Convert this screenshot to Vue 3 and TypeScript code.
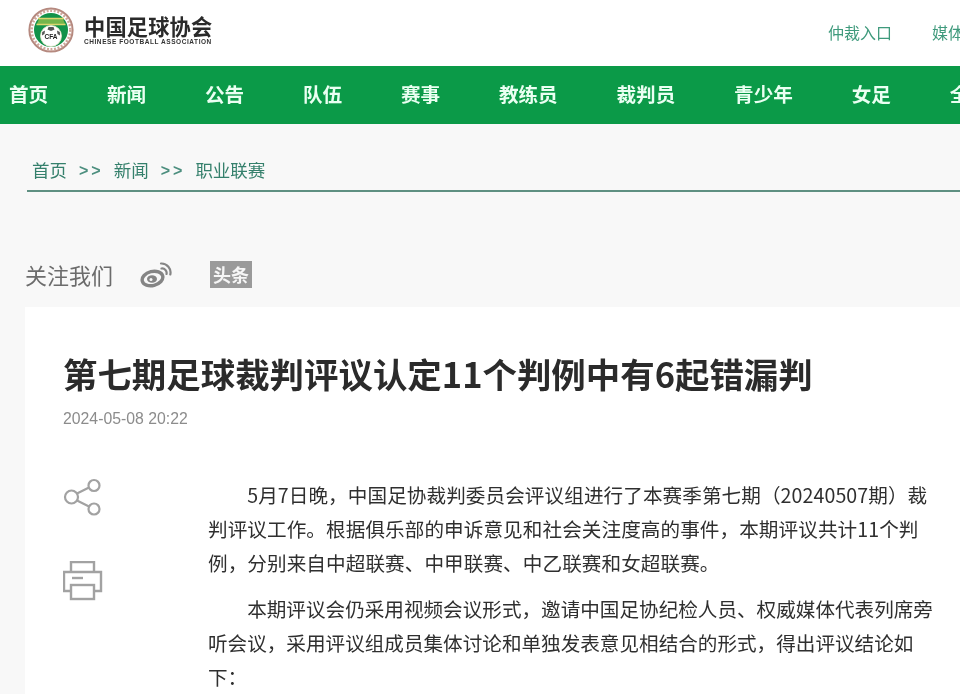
<script setup lang="ts">
const navItems: string[] = ['首页', '新闻', '公告', '队伍', '赛事', '教练员', '裁判员', '青少年', '女足', '全部']
const crumbs: string[] = ['首页', '新闻', '职业联赛']
</script>

<template>
  <div class="page">
    <header class="top">
      <div class="brand">
        <svg class="emblem" width="48" height="48" viewBox="0 0 48 48">
          <circle cx="24" cy="24" r="21.600" fill="#fff" stroke="#b5897f" stroke-width="2" />
          <circle cx="24" cy="24" r="19.400" fill="none" stroke="#cfa79b" stroke-width="2.600" stroke-dasharray="2 1.600" />
          <circle cx="24" cy="24" r="17" fill="#12924a" />
          <path d="M12 13h24l2.500 6h-29z" fill="#74b54c" />
          <path d="M11 12.500h26M9.500 18.500h29" stroke="#dcd56e" stroke-width="1.600" />
          <circle cx="24" cy="30" r="10.500" fill="#fff" stroke="#e6e6c8" stroke-width="0.800" />
          <path d="M21.500 21h5l1 2.500-3.500 1.500-3.500-1.500zM15.200 26l2.800-1.500-.5 3.500-2.500 1.500zM32.800 26l-2.800-1.500.5 3.500 2.500 1.500z" fill="#555" />
          <text x="24" y="33" class="cfa">CFA</text>
        </svg>
        <div class="brand-text">
          <span class="cn">中国足球协会</span>
          <span class="en">CHINESE FOOTBALL ASSOCIATION</span>
        </div>
      </div>
      <div class="top-links">
        <span>仲裁入口</span>
        <span>媒体入口</span>
      </div>
    </header>

    <nav class="nav">
      <span v-for="item in navItems" :key="item">{{ item }}</span>
    </nav>

    <section class="upper">
      <div class="crumbs">
        <template v-for="(c, i) in crumbs" :key="c">
          <span v-if="i > 0" class="sep">&gt;&gt;</span>
          <span>{{ c }}</span>
        </template>
      </div>
      <div class="follow">
        <span>关注我们</span>
        <svg class="weibo" width="32" height="28" viewBox="0 0 32 28" fill="none">
          <ellipse cx="12.500" cy="18.500" rx="10.500" ry="7" transform="rotate(-14 12.500 18.500)" stroke="#858585" stroke-width="3.400" />
          <ellipse cx="12" cy="19" rx="5" ry="3.800" fill="#858585" />
          <circle cx="11" cy="19.500" r="1.500" fill="#f8f8f8" />
          <path d="M21.500 8.500a4.500 4.500 0 0 1 5 5.500M21 3.500a9 9 0 0 1 9.300 11" stroke="#858585" stroke-width="2.200" stroke-linecap="round" />
        </svg>
        <span class="toutiao">头条</span>
      </div>
    </section>

    <main class="card">
      <h1>第七期足球裁判评议认定11个判例中有6起错漏判</h1>
      <div class="date">2024-05-08 20:22</div>
      <div class="body">
        <aside class="tools">
          <svg width="40" height="40" viewBox="0 0 40 40" fill="none" stroke="#a2a2a2" stroke-width="2.200">
            <circle cx="8.500" cy="20" r="6.500" />
            <circle cx="31" cy="8.500" r="5.500" />
            <circle cx="31" cy="32" r="5.500" />
            <path d="M14 16.500l12-6M14 23.500l12 6" />
          </svg>
          <svg width="40" height="40" viewBox="0 0 40 40" fill="none" stroke="#a2a2a2" stroke-width="2.400">
            <path d="M8 11V1h23v10M8 30H1V11h37v19h-7" />
            <rect x="8" y="24" width="23" height="14" />
            <path d="M9 17h11" />
          </svg>
        </aside>
        <article class="text">
          <p class="first">5月7日晚，中国足协裁判委员会评议组进行了本赛季第七期（20240507期）裁判评议工作。根据俱乐部的申诉意见和社会关注度高的事件，本期评议共计11个判例，分别来自中超联赛、中甲联赛、中乙联赛和女超联赛。</p>
          <p>本期评议会仍采用视频会议形式，邀请中国足协纪检人员、权威媒体代表列席旁听会议，采用评议组成员集体讨论和单独发表意见相结合的形式，得出评议结论如下：</p>
        </article>
      </div>
    </main>
  </div>
</template>

<style>
html, body { margin: 0; overflow: hidden; background: #fff; }
</style>

<style scoped>
.page {
  width: 960px;
  height: 694px;
  overflow: hidden;
  font-family: "Noto Sans CJK SC", "Liberation Sans", sans-serif;
  background: #f8f8f8;
  filter: blur(0.4px);
}
.top {
  height: 66px;
  background: #fff;
  display: flex;
  align-items: center;
  justify-content: space-between;
}
.brand {
  display: flex;
  align-items: center;
  gap: 9px;
  padding-left: 27px;
  padding-bottom: 6px;
}
.cfa {
  font: 700 6.500px "Liberation Sans", sans-serif;
  text-anchor: middle;
  fill: #222;
}
.brand-text {
  display: flex;
  flex-direction: column;
}
.cn {
  font-size: 21.200px;
  line-height: 24px;
  font-weight: 700;
  color: #2a2a2a;
  letter-spacing: 0.2px;
}
.en {
  font: 700 6.500px/8px "Liberation Sans", sans-serif;
  color: #333;
  letter-spacing: 0.56px;
  white-space: nowrap;
}
.top-links {
  display: flex;
  gap: 40px;
  width: 132px;
  flex: none;
  font-size: 16px;
  line-height: 20px;
  color: #3f9a7c;
  padding-bottom: 3px;
}
.top-links span {
  flex: none;
}
.nav {
  height: 58px;
  box-sizing: border-box;
  padding: 0 0 4px 9px;
  background: #0b9a48;
  display: flex;
  align-items: center;
  gap: 58.800px;
  font-size: 19.600px;
  font-weight: 700;
  color: #eafff2;
  white-space: nowrap;
}
.upper {
  height: 183px;
  display: flex;
  flex-direction: column;
  padding-left: 27px;
}
.crumbs {
  height: 68px;
  box-sizing: border-box;
  padding: 34px 0 0 5px;
  display: flex;
  gap: 12px;
  font-size: 17.500px;
  line-height: 24px;
  color: #35806c;
  border-bottom: 2px solid #5f9082;
}
.sep {
  margin-right: -2px;
  padding-top: 1px;
  letter-spacing: 3px;
  font-family: "Liberation Sans", sans-serif;
  font-size: 16px;
  font-weight: 700;
  color: #4d8f7f;
}
.follow {
  margin-top: 67px;
  margin-left: -2px;
  display: flex;
  align-items: center;
  font-size: 22px;
  line-height: 30px;
  color: #6c6c6c;
}
.weibo {
  margin-left: 27px;
}
.toutiao {
  margin-left: 38px;
  width: 42px;
  height: 27px;
  background: #9a9a9a;
  color: #f6f6f6;
  font-size: 18px;
  line-height: 27px;
  font-weight: 700;
  text-align: center;
}
.card {
  margin-left: 25px;
  height: 387px;
  background: #fff;
  padding: 42px 0 0 38px;
}
h1 {
  margin: 0;
  font-size: 34.450px;
  line-height: 48px;
  font-weight: 700;
  color: #2b2b2b;
  white-space: nowrap;
}
.date {
  margin-top: 12px;
  font: 15.800px/20px "Liberation Sans", sans-serif;
  color: #8c8c8c;
}
.body {
  display: flex;
  margin-top: 47px;
}
.tools {
  width: 145px;
  flex: none;
  display: flex;
  flex-direction: column;
  gap: 44px;
  margin-top: 1px;
}
.text {
  width: 730px;
  flex: none;
  padding-top: 2px;
  font-size: 19.600px;
  line-height: 34px;
  color: #2f2f2f;
}
.text p {
  margin: 0 0 12px;
  text-indent: 2em;
}
.text .first {
  letter-spacing: 0.08px;
}
</style>
